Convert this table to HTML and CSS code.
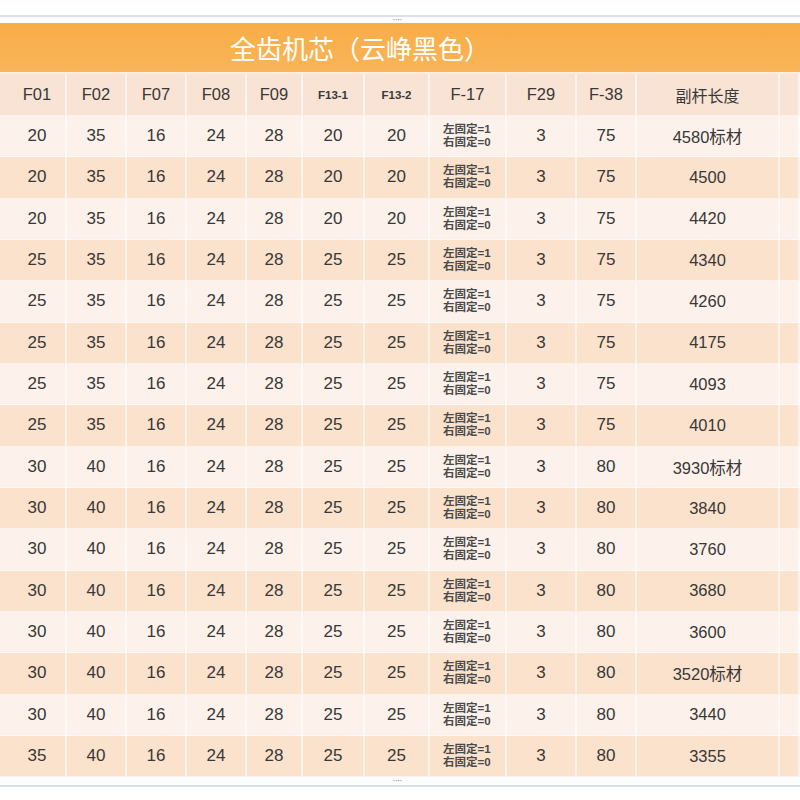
FILE: index.html
```html
<!DOCTYPE html>
<html lang="zh">
<head>
<meta charset="utf-8">
<title>全齿机芯（云峥黑色）</title>
<link rel="stylesheet" href="styles.css">
</head>
<body>
<div class="page">
  <div class="top-strip"></div>
  <div class="top-line"></div>
  <div class="dots-row"><span class="dots">····</span></div>
  <div class="title-bar"><span class="title">全齿机芯（云峥黑色）</span></div>
  <div class="sep"></div>
  <div class="sheet" id="sheet">
    <div class="row head">
      <div class="c first">F01</div><div class="c">F02</div><div class="c">F07</div><div class="c">F08</div><div class="c">F09</div>
      <div class="c sm">F13-1</div><div class="c sm">F13-2</div><div class="c">F-17</div><div class="c">F29</div><div class="c">F-38</div>
      <div class="c cn">副杆长度</div><div class="c"></div>
    </div>
  </div>
  <div class="bottom-line"><span class="dots">····</span></div>
</div>
<script src="app.js"></script>
</body>
</html>
```

FILE: app.js
```js
const rows = [
  ["20","35","16","24","28","20","20","3","75","4580标材"],
  ["20","35","16","24","28","20","20","3","75","4500"],
  ["20","35","16","24","28","20","20","3","75","4420"],
  ["25","35","16","24","28","25","25","3","75","4340"],
  ["25","35","16","24","28","25","25","3","75","4260"],
  ["25","35","16","24","28","25","25","3","75","4175"],
  ["25","35","16","24","28","25","25","3","75","4093"],
  ["25","35","16","24","28","25","25","3","75","4010"],
  ["30","40","16","24","28","25","25","3","80","3930标材"],
  ["30","40","16","24","28","25","25","3","80","3840"],
  ["30","40","16","24","28","25","25","3","80","3760"],
  ["30","40","16","24","28","25","25","3","80","3680"],
  ["30","40","16","24","28","25","25","3","80","3600"],
  ["30","40","16","24","28","25","25","3","80","3520标材"],
  ["30","40","16","24","28","25","25","3","80","3440"],
  ["35","40","16","24","28","25","25","3","80","3355"]
];
const sheet = document.getElementById("sheet");
rows.forEach((r, i) => {
  const row = document.createElement("div");
  row.className = "row " + (i % 2 ? "even" : "odd");
  let html = "";
  for (let k = 0; k < 7; k++) {
    html += `<div class="c${k === 0 ? " first" : ""}">${r[k]}</div>`;
  }
  html += `<div class="c fix"><div>左固定=1</div><div>右固定=0</div></div>`;
  html += `<div class="c">${r[7]}</div><div class="c">${r[8]}</div>`;
  html += `<div class="c len">${r[9]}</div><div class="c"></div>`;
  row.innerHTML = html;
  sheet.appendChild(row);
});
```

FILE: styles.css
```css
html, body {
  margin: 0;
  padding: 0;
  background: #ffffff;
}
body {
  font-family: "Liberation Sans", "Noto Sans CJK SC", sans-serif;
  color: #383838;
}
.page {
  width: 800px;
  height: 800px;
  overflow: hidden;
  display: flex;
  flex-direction: column;
}
.top-strip {
  height: 15px;
  background: #ffffff;
}
.top-line {
  height: 2px;
  background: #d9e1e6;
}
.dots-row {
  height: 6px;
  background: #fbfcfd;
  display: flex;
  justify-content: center;
  align-items: center;
}
.dots {
  font-size: 10px;
  line-height: 6px;
  color: #8f99a2;
  letter-spacing: -1px;
  margin-right: 6px;
}
.title-bar {
  height: 49px;
  background: linear-gradient(#f8ac47, #f9b558);
  display: flex;
  align-items: center;
  justify-content: center;
  padding-right: 80px;
}
.title {
  font-family: "Noto Sans CJK SC", sans-serif;
  font-size: 26px;
  color: #ffffff;
  font-weight: 400;
}
.sep {
  height: 2px;
  background: #fcecdf;
}
.sheet {
  display: flex;
  flex-direction: column;
}
.row {
  display: grid;
  grid-template-columns: 67px 60px 60px 60px 56px 62px 65px 77px 70px 60px 143px 1fr;
  height: 41.33px;
  border-bottom: 1px solid rgba(255, 255, 255, 0.55);
  box-sizing: border-box;
}
.row.head {
  height: 42px;
  background: #f9e3d4;
}
.row.odd {
  background: #fdf2eb;
}
.row.even {
  background: #fbe2cd;
}
.c {
  display: flex;
  align-items: center;
  justify-content: center;
  font-size: 17px;
  border-right: 2px solid rgba(255, 255, 255, 0.6);
  box-sizing: border-box;
}
.c.first {
  padding-left: 9px;
}
.head .c {
  font-size: 16.5px;
}
.head .c.sm {
  font-size: 11.5px;
  font-weight: 700;
}
.head .c.cn {
  font-size: 16px;
}
.c.fix {
  flex-direction: column;
  align-items: flex-start;
  justify-content: center;
  padding-left: 13px;
  font-size: 11.5px;
  line-height: 13px;
  font-weight: 700;
  color: #4a4a4a;
}
.c.len {
  font-size: 16.5px;
}
.bottom-line {
  height: 8px;
  background: #fbfcfd;
  border-bottom: 2px solid #d9e1e6;
  display: flex;
  justify-content: center;
  align-items: center;
}
```
